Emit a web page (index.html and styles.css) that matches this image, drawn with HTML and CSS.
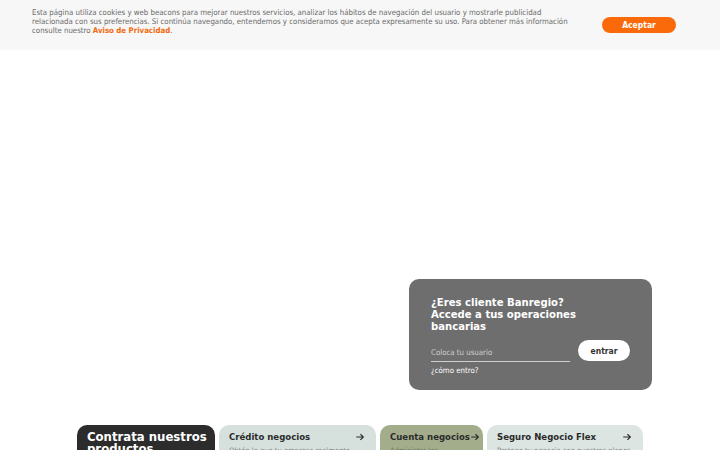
FILE: index.html
```html
<!DOCTYPE html>
<html lang="es">
<head>
    <meta charset="UTF-8">
    <meta name="viewport" content="width=device-width, initial-scale=1.0">
    <title>Banregio</title>
    <link rel="stylesheet" href="styles.css">
</head>
<body>
    <div class="cookie-bar">
        <p class="cookie-text">Esta página utiliza cookies y web beacons para mejorar nuestros servicios, analizar los hábitos de navegación del usuario y mostrarle publicidad relacionada con sus preferencias. Si continúa navegando, entendemos y consideramos que acepta expresamente su uso. Para obtener más información consulte nuestro <a href="#">Aviso de Privacidad</a>.</p>
        <button class="btn-aceptar">Aceptar</button>
    </div>

    <div class="hero">
        <div class="login-card">
            <h2>¿Eres cliente Banregio?<br>Accede a tus operaciones<br>bancarias</h2>
            <div class="login-row">
                <div class="login-field">
                    <input type="text" placeholder="Coloca tu usuario">
                    <a href="#" class="como-entro">¿cómo entro?</a>
                </div>
                <button class="btn-entrar">entrar</button>
            </div>
        </div>
    </div>

    <div class="productos">
        <div class="card card-titulo">
            <h3>Contrata nuestros productos</h3>
        </div>
        <div class="card card-credito">
            <div class="card-head">
                <span>Crédito negocios</span>
                <svg class="arrow" viewBox="0 0 12 12"><path d="M1.5 6h8.5M6.5 2.5L10 6l-3.5 3.5" fill="none" stroke="#2b2b2b" stroke-width="1.4"/></svg>
            </div>
            <p>Obtén lo que tu empresa realmente necesita</p>
        </div>
        <div class="card card-cuenta">
            <div class="card-head">
                <span>Cuenta negocios</span>
                <svg class="arrow" viewBox="0 0 12 12"><path d="M1.5 6h8.5M6.5 2.5L10 6l-3.5 3.5" fill="none" stroke="#2b2b2b" stroke-width="1.4"/></svg>
            </div>
            <p>Administra las chequeras de tu negocio</p>
        </div>
        <div class="card card-seguro">
            <div class="card-head">
                <span>Seguro Negocio Flex</span>
                <svg class="arrow" viewBox="0 0 12 12"><path d="M1.5 6h8.5M6.5 2.5L10 6l-3.5 3.5" fill="none" stroke="#2b2b2b" stroke-width="1.4"/></svg>
            </div>
            <p>Protege tu negocio con nuestros planes</p>
        </div>
    </div>
</body>
</html>
```

FILE: styles.css
```css
body {
    font-family: 'DejaVu Sans Condensed', 'DejaVu Sans', sans-serif;
    background-color: #fff;
    margin: 0;
    overflow: hidden;
}
.cookie-bar {
    background-color: #f7f7f7;
    height: 50px;
    display: flex;
    align-items: flex-start;
    padding: 0 44px 0 32px;
    box-sizing: border-box;
}
.cookie-text {
    margin: 8px 0 0;
    font-size: 7.8px;
    line-height: 9px;
    color: #6a6a6a;
    width: 545px;
}
.cookie-text a {
    color: #f26a10;
    font-weight: bold;
    text-decoration: none;
}
.btn-aceptar {
    margin: 17px 0 0 auto;
    width: 74px;
    height: 16px;
    background-color: #fa6a0a;
    color: #fff;
    border: none;
    border-radius: 8px;
    font-family: inherit;
    font-size: 8.5px;
    font-weight: bold;
    padding: 0;
}
.hero {
    height: 360px;
    display: flex;
    justify-content: flex-end;
    align-items: flex-end;
    padding: 0 68px 20px 0;
    box-sizing: border-box;
}
.login-card {
    background-color: #6e6e6e;
    border-radius: 10px;
    width: 243px;
    height: 111px;
    box-sizing: border-box;
    padding: 18px 22px 0;
    color: #fff;
}
.login-card h2 {
    margin: 0;
    font-size: 11.2px;
    line-height: 12px;
    font-weight: bold;
}
.login-row {
    display: flex;
    align-items: flex-start;
    margin-top: 7px;
}
.login-field {
    width: 139px;
}
.login-field input {
    width: 100%;
    box-sizing: border-box;
    background: transparent;
    border: none;
    border-bottom: 1px solid #cfcfcf;
    padding: 3px 0 4px;
    font-family: inherit;
    font-size: 7.8px;
    color: #fff;
    outline: none;
}
.login-field input::placeholder {
    color: #d0d0d0;
}
.como-entro {
    display: block;
    margin-top: 4px;
    font-size: 7.8px;
    color: #fff;
    text-decoration: none;
}
.btn-entrar {
    margin-left: 8px;
    margin-top: 0;
    width: 52px;
    height: 21px;
    border: none;
    border-radius: 11px;
    background-color: #fff;
    color: #333;
    font-family: inherit;
    font-size: 8.5px;
    font-weight: bold;
    padding: 0;
}
.productos {
    display: flex;
    gap: 4px;
    padding: 15px 0 0 77px;
}
.card {
    height: 80px;
    border-radius: 10px;
    box-sizing: border-box;
    padding: 6px 11px 0 10px;
}
.card-titulo {
    width: 138px;
    background-color: #2c2c2c;
    color: #fff;
    padding-right: 4px;
}
.card-titulo h3 {
    margin: 0;
    font-size: 13px;
    line-height: 12px;
    font-weight: bold;
}
.card-credito {
    width: 157px;
    background-color: #d6e1de;
}
.card-cuenta {
    width: 103px;
    background-color: #a3ad8c;
}
.card-seguro {
    width: 156px;
    background-color: #dde5e3;
}
.card-head {
    display: flex;
    justify-content: space-between;
    align-items: center;
    font-size: 9.5px;
    font-weight: bold;
    color: #2b2b2b;
    height: 11px;
}
.card-head span {
    white-space: nowrap;
}
.arrow {
    width: 10px;
    height: 10px;
    flex-shrink: 0;
}
.card p {
    margin: 4px 0 0;
    font-size: 7.5px;
    line-height: 9px;
    color: #8a8a8a;
}
.card-cuenta p {
    color: #6f7760;
}
```
